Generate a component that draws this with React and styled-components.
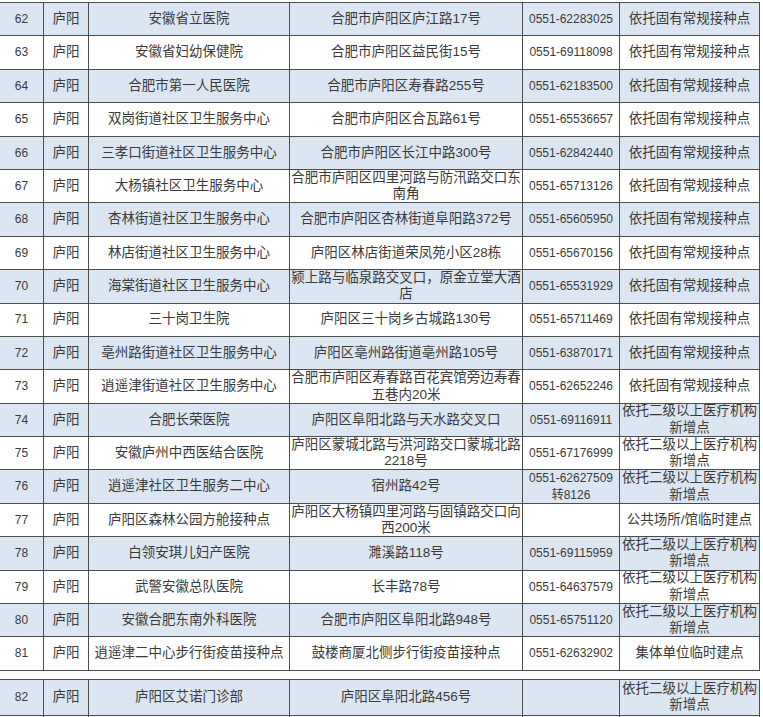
import React from "react";
import styled, { createGlobalStyle } from "styled-components";

const GlobalStyle = createGlobalStyle`
  html, body {
    margin: 0;
    padding: 0;
    background: #ffffff;
    overflow: hidden;
  }
  body {
    font-family: "Liberation Sans", "Noto Sans CJK SC", sans-serif;
    color: #3a3a3a;
  }
`;

const Page = styled.div`
  width: 763px;
  height: 717px;
  overflow: hidden;
  padding-top: 2px;
  box-sizing: border-box;
`;

const Section = styled.div`
  width: 760px;
  border-top: 1px solid #4d4d4d;
  margin-bottom: ${(p) => p.$gap || 0}px;
`;

const Row = styled.div`
  display: grid;
  grid-template-columns: 44px 45px 201px 233px 97px 140px;
  height: ${(p) => p.$height || 33.4}px;
  background: ${(p) => (p.$shade ? "#dce6f2" : "#ffffff")};
  border-bottom: 1px solid #4d4d4d;
  box-sizing: border-box;
`;

const Cell = styled.div`
  display: flex;
  align-items: center;
  justify-content: center;
  text-align: center;
  padding: 0 1px;
  border-right: 1px solid #4d4d4d;
  box-sizing: border-box;
  font-size: 13.5px;
  line-height: 16.5px;
  overflow: hidden;
`;

const NumCell = styled(Cell)`
  font-size: 12px;
`;

const PhoneCell = styled(Cell)`
  font-size: 12px;
`;

const A = "依托固有常规接种点";
const B = "依托二级以上医疗机构新增点";

const rows = [
  ["62", "安徽省立医院", "合肥市庐阳区庐江路17号", "0551-62283025", A],
  ["63", "安徽省妇幼保健院", "合肥市庐阳区益民街15号", "0551-69118098", A],
  ["64", "合肥市第一人民医院", "合肥市庐阳区寿春路255号", "0551-62183500", A],
  ["65", "双岗街道社区卫生服务中心", "合肥市庐阳区合瓦路61号", "0551-65536657", A],
  ["66", "三孝口街道社区卫生服务中心", "合肥市庐阳区长江中路300号", "0551-62842440", A],
  ["67", "大杨镇社区卫生服务中心", "合肥市庐阳区四里河路与防汛路交口东南角", "0551-65713126", A],
  ["68", "杏林街道社区卫生服务中心", "合肥市庐阳区杏林街道阜阳路372号", "0551-65605950", A],
  ["69", "林店街道社区卫生服务中心", "庐阳区林店街道荣凤苑小区28栋", "0551-65670156", A],
  ["70", "海棠街道社区卫生服务中心", "颍上路与临泉路交叉口，原金立堂大酒店", "0551-65531929", A],
  ["71", "三十岗卫生院", "庐阳区三十岗乡古城路130号", "0551-65711469", A],
  ["72", "亳州路街道社区卫生服务中心", "庐阳区亳州路街道亳州路105号", "0551-63870171", A],
  ["73", "逍遥津街道社区卫生服务中心", "合肥市庐阳区寿春路百花宾馆旁边寿春五巷内20米", "0551-62652246", A],
  ["74", "合肥长荣医院", "庐阳区阜阳北路与天水路交叉口", "0551-69116911", B],
  ["75", "安徽庐州中西医结合医院", "庐阳区蒙城北路与洪河路交口蒙城北路2218号", "0551-67176999", B],
  ["76", "逍遥津社区卫生服务二中心", "宿州路42号", "0551-62627509转8126", B],
  ["77", "庐阳区森林公园方舱接种点", "庐阳区大杨镇四里河路与固镇路交口向西200米", "", "公共场所/馆临时建点"],
  ["78", "白领安琪儿妇产医院", "濉溪路118号", "0551-69115959", B],
  ["79", "武警安徽总队医院", "长丰路78号", "0551-64637579", B],
  ["80", "安徽合肥东南外科医院", "合肥市庐阳区阜阳北路948号", "0551-65751120", B],
  ["81", "逍遥津二中心步行街疫苗接种点", "鼓楼商厦北侧步行街疫苗接种点", "0551-62632902", "集体单位临时建点"],
];

const tail = [
  ["82", "庐阳", "庐阳区艾诺门诊部", "庐阳区阜阳北路456号", "", B],
  ["83", "", "", "", "", B],
];

function TableRow({ data, shade, height }) {
  const [no, district, name, addr, phone, kind] = data;
  return (
    <Row $shade={shade} $height={height}>
      <NumCell>{no}</NumCell>
      <Cell>{district}</Cell>
      <Cell>{name}</Cell>
      <Cell>{addr}</Cell>
      <PhoneCell>{phone}</PhoneCell>
      <Cell>{kind}</Cell>
    </Row>
  );
}

export default function App() {
  return (
    <>
      <GlobalStyle />
      <Page>
        <Section $gap={8}>
          {rows.map((r) => (
            <TableRow
              key={r[0]}
              data={[r[0], "庐阳", r[1], r[2], r[3], r[4]]}
              shade={Number(r[0]) % 2 === 0}
            />
          ))}
        </Section>
        <Section>
          {tail.map((r) => (
            <TableRow
              key={r[0]}
              data={r}
              shade={Number(r[0]) % 2 === 0}
              height={36}
            />
          ))}
        </Section>
      </Page>
    </>
  );
}
